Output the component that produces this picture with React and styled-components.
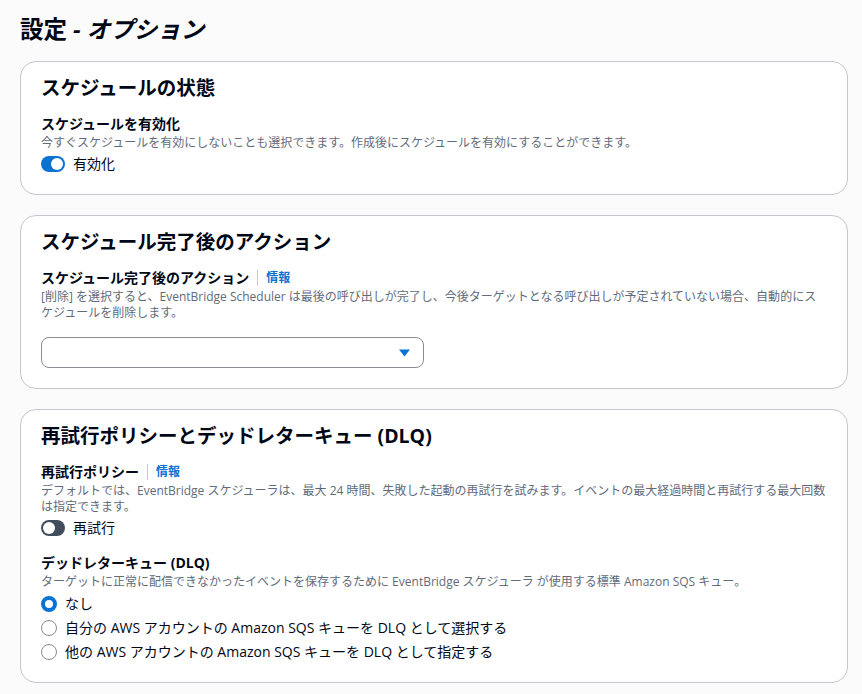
import React from 'react'
import styled, { createGlobalStyle } from 'styled-components'

const GlobalStyle = createGlobalStyle`
  body {
    margin: 0;
    background: #fbfbfb;
    font-family: 'Open Sans', 'Noto Sans CJK JP', sans-serif;
    color: #000716;
  }
`

const Page = styled.div`
  padding: 14px 14px 12px 20px;
`

const PageTitle = styled.h1`
  margin: 0 0 17px;
  font-size: 23.5px;
  line-height: 30px;
  font-weight: 700;
  em {
    font-style: italic;
  }
`

const Stack = styled.div`
  display: flex;
  flex-direction: column;
  gap: 20px;
`

const Card = styled.section`
  background: #fff;
  border: 1px solid #c6c6cd;
  border-radius: 16px;
  padding: 14px 20px 20px;
`

const CardTitle = styled.h2`
  margin: 0 0 15px;
  font-size: 19.5px;
  line-height: 24px;
  font-weight: 700;
`

const Field = styled.div`
  & + & {
    margin-top: 16px;
  }
`

const Label = styled.div`
  display: flex;
  align-items: center;
  font-size: 14px;
  line-height: 18px;
  font-weight: 700;
`

const Separator = styled.span`
  width: 1px;
  height: 16px;
  background: #c6c6cd;
  margin: 0 8px;
`

const InfoLink = styled.a`
  color: #0972d3;
  font-size: 12px;
  font-weight: 700;
  text-decoration: none;
`

const Description = styled.p`
  margin: 2px 0 0;
  font-size: 12px;
  line-height: 16px;
  color: #5f6b7a;
`

const ToggleRow = styled.label`
  display: flex;
  align-items: center;
  gap: 8px;
  margin-top: 3px;
  font-size: 14px;
  line-height: 20px;
`

const Track = styled.span`
  position: relative;
  width: 24px;
  height: 16px;
  border-radius: 8px;
  background: ${(p) => (p.$on ? '#0972d3' : '#414d5c')};
  &::after {
    content: '';
    position: absolute;
    top: 2px;
    left: ${(p) => (p.$on ? '10px' : '2px')};
    width: 12px;
    height: 12px;
    border-radius: 50%;
    background: #fff;
  }
`

const Select = styled.div`
  display: flex;
  align-items: center;
  justify-content: flex-end;
  width: 383px;
  height: 31px;
  box-sizing: border-box;
  margin-top: 16px;
  padding-right: 12px;
  border: 1px solid #8c8c94;
  border-radius: 8px;
  background: #fff;
`

const RadioGroup = styled.div`
  display: flex;
  flex-direction: column;
  gap: 4px;
  margin-top: 4px;
`

const RadioRow = styled.label`
  display: flex;
  align-items: center;
  gap: 8px;
  font-size: 14px;
  line-height: 20px;
`

const RadioDot = styled.span`
  width: 16px;
  height: 16px;
  box-sizing: border-box;
  border-radius: 50%;
  background: #fff;
  border: ${(p) => (p.$checked ? '4px solid #0972d3' : '1.5px solid #8c8c94')};
`

const Caret = () => (
  <svg width="13" height="12" viewBox="0 0 13 12">
    <path d="M1 2.5h11L6.5 9.5z" fill="#0972d3" />
  </svg>
)

const dlqOptions = [
  'なし',
  '自分の AWS アカウントの Amazon SQS キューを DLQ として選択する',
  '他の AWS アカウントの Amazon SQS キューを DLQ として指定する',
]

export default function App() {
  return (
    <Page>
      <GlobalStyle />
      <PageTitle>
        設定 <em>- オプション</em>
      </PageTitle>
      <Stack>
        <Card>
          <CardTitle>スケジュールの状態</CardTitle>
          <Field>
            <Label>スケジュールを有効化</Label>
            <Description>
              今すぐスケジュールを有効にしないことも選択できます。作成後にスケジュールを有効にすることができます。
            </Description>
            <ToggleRow>
              <Track $on />
              有効化
            </ToggleRow>
          </Field>
        </Card>

        <Card>
          <CardTitle>スケジュール完了後のアクション</CardTitle>
          <Field>
            <Label>
              スケジュール完了後のアクション
              <Separator />
              <InfoLink href="#">情報</InfoLink>
            </Label>
            <Description>
              [削除] を選択すると、EventBridge Scheduler
              は最後の呼び出しが完了し、今後ターゲットとなる呼び出しが予定されていない場合、自動的にスケジュールを削除します。
            </Description>
            <Select>
              <Caret />
            </Select>
          </Field>
        </Card>

        <Card>
          <CardTitle>再試行ポリシーとデッドレターキュー (DLQ)</CardTitle>
          <Field>
            <Label>
              再試行ポリシー
              <Separator />
              <InfoLink href="#">情報</InfoLink>
            </Label>
            <Description>
              デフォルトでは、EventBridge スケジューラは、最大 24
              時間、失敗した起動の再試行を試みます。イベントの最大経過時間と再試行する最大回数は指定できます。
            </Description>
            <ToggleRow>
              <Track />
              再試行
            </ToggleRow>
          </Field>
          <Field>
            <Label>デッドレターキュー (DLQ)</Label>
            <Description>
              ターゲットに正常に配信できなかったイベントを保存するために EventBridge スケジューラ
              が使用する標準 Amazon SQS キュー。
            </Description>
            <RadioGroup>
              {dlqOptions.map((o, i) => (
                <RadioRow key={i}>
                  <RadioDot $checked={i === 0} />
                  {o}
                </RadioRow>
              ))}
            </RadioGroup>
          </Field>
        </Card>
      </Stack>
    </Page>
  )
}
